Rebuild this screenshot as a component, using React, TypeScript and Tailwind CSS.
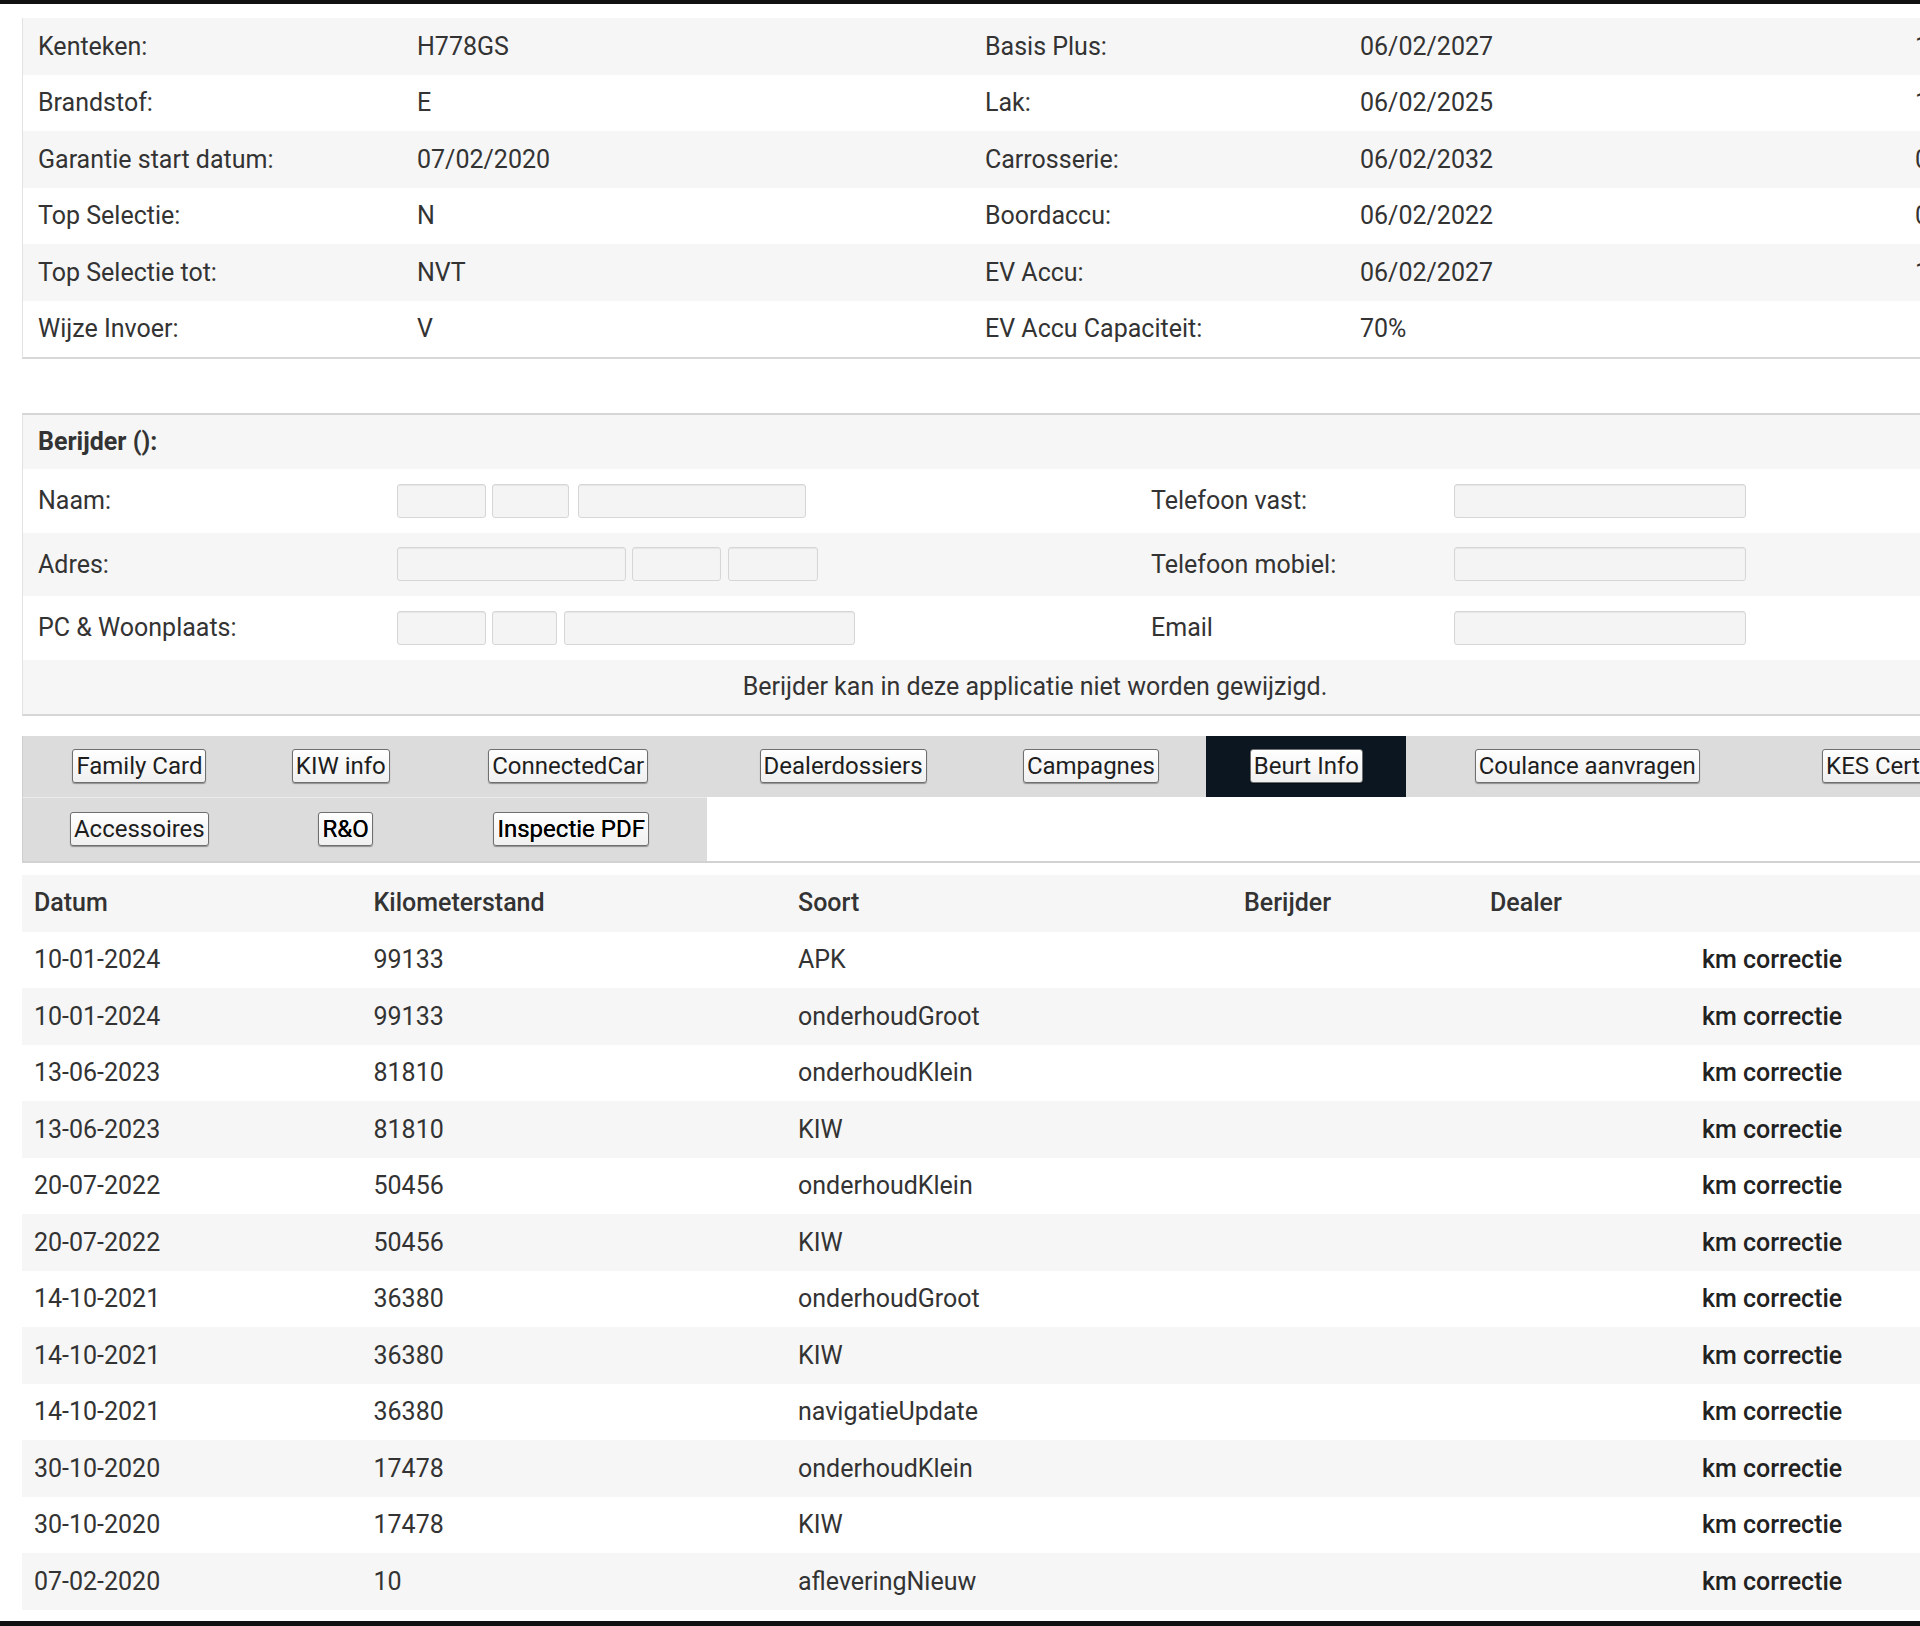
import React from "react";

const vehicleRows: [string, string, string, string, string][] = [
  ["Kenteken:", "H778GS", "Basis Plus:", "06/02/2027", "1"],
  ["Brandstof:", "E", "Lak:", "06/02/2025", "1"],
  ["Garantie start datum:", "07/02/2020", "Carrosserie:", "06/02/2032", "0"],
  ["Top Selectie:", "N", "Boordaccu:", "06/02/2022", "0"],
  ["Top Selectie tot:", "NVT", "EV Accu:", "06/02/2027", "1"],
  ["Wijze Invoer:", "V", "EV Accu Capaciteit:", "70%", ""],
];

const beurten: [string, string, string][] = [
  ["10-01-2024", "99133", "APK"],
  ["10-01-2024", "99133", "onderhoudGroot"],
  ["13-06-2023", "81810", "onderhoudKlein"],
  ["13-06-2023", "81810", "KIW"],
  ["20-07-2022", "50456", "onderhoudKlein"],
  ["20-07-2022", "50456", "KIW"],
  ["14-10-2021", "36380", "onderhoudGroot"],
  ["14-10-2021", "36380", "KIW"],
  ["14-10-2021", "36380", "navigatieUpdate"],
  ["30-10-2020", "17478", "onderhoudKlein"],
  ["30-10-2020", "17478", "KIW"],
  ["07-02-2020", "10", "afleveringNieuw"],
];

function Input({ w }: { w: string }) {
  return (
    <div
      className={`${w} h-[34px] rounded-[3px] border border-[#d6d6d6] bg-[#f4f4f4] shadow-[inset_0_1px_1px_rgba(0,0,0,0.06)]`}
    />
  );
}

function TabButton({ label, dark }: { label: string; dark?: boolean }) {
  return (
    <button
      className={`h-[34px] px-[3px] rounded-[3px] border border-[#6f6f6f] bg-gradient-to-b from-white to-[#f0f0f0] text-[24px] leading-none shadow-[0_1px_1px_rgba(0,0,0,0.35)] whitespace-nowrap ${
        dark ? "text-black [text-shadow:0_0_0.4px_#000]" : "text-[#1e1e1e]"
      }`}
    >
      {label}
    </button>
  );
}

export default function App() {
  return (
    <div className="w-[1920px] h-[1626px] overflow-hidden bg-white flex flex-col font-['Roboto',sans-serif] text-[25px] text-[#333]">
      <div className="h-[4px] bg-[#111] shrink-0" />
      <div className="flex-1 pl-[22px] pt-[14px] overflow-hidden">
        <div className="w-[2025px]">
          {/* Vehicle info table */}
          <div className="border-l border-[#e2e2e2] border-b-2 border-b-[#d8d8d8]">
            {vehicleRows.map((r, i) => (
              <div
                key={i}
                className={`h-[56.5px] grid grid-cols-[379px_568px_375px_555px_1fr] items-center ${
                  i % 2 === 0 ? "bg-[#f6f6f6]" : "bg-white"
                }`}
              >
                <div className="pl-[15px] whitespace-nowrap">{r[0]}</div>
                <div className="pl-[15px] whitespace-nowrap">{r[1]}</div>
                <div className="pl-[15px] whitespace-nowrap">{r[2]}</div>
                <div className="pl-[15px] whitespace-nowrap">{r[3]}</div>
                <div className="pl-[15px] whitespace-nowrap">{r[4]}</div>
              </div>
            ))}
          </div>

          {/* Berijder */}
          <div className="mt-[54px] border-t-2 border-[#d6d6d6] border-l border-l-[#e2e2e2] border-b-2 border-b-[#d6d6d6]">
            <div className="h-[54px] flex items-center bg-[#f6f6f6] pl-[15px] font-bold">Berijder ():</div>
            <div className="h-[63.5px] flex items-center bg-white">
              <div className="w-[373.5px] pl-[15px] shrink-0">Naam:</div>
              <div className="w-[754.5px] shrink-0 flex">
                <Input w="w-[89.5px]" />
                <div className="w-[6px]" />
                <Input w="w-[77px]" />
                <div className="w-[9px]" />
                <Input w="w-[227.5px]" />
              </div>
              <div className="w-[303px] shrink-0">Telefoon vast:</div>
              <Input w="w-[292px]" />
            </div>
            <div className="h-[63.5px] flex items-center bg-[#f6f6f6]">
              <div className="w-[373.5px] pl-[15px] shrink-0">Adres:</div>
              <div className="w-[754.5px] shrink-0 flex">
                <Input w="w-[229px]" />
                <div className="w-[6px]" />
                <Input w="w-[89.5px]" />
                <div className="w-[7px]" />
                <Input w="w-[90px]" />
              </div>
              <div className="w-[303px] shrink-0">Telefoon mobiel:</div>
              <Input w="w-[292px]" />
            </div>
            <div className="h-[63.5px] flex items-center bg-white">
              <div className="w-[373.5px] pl-[15px] shrink-0">PC &amp; Woonplaats:</div>
              <div className="w-[754.5px] shrink-0 flex">
                <Input w="w-[89.5px]" />
                <div className="w-[6px]" />
                <Input w="w-[65px]" />
                <div className="w-[7px]" />
                <Input w="w-[290.5px]" />
              </div>
              <div className="w-[303px] shrink-0">Email</div>
              <Input w="w-[292px]" />
            </div>
            <div className="h-[54px] flex items-center justify-center bg-[#f6f6f6]">
              Berijder kan in deze applicatie niet worden gewijzigd.
            </div>
          </div>

          {/* Tabs */}
          <div className="mt-[20px] border-b-2 border-[#d2d2d2]">
            <div className="h-[61px] flex bg-[#dcdcdc] border-l border-[#cfcfcf]">
              <div className="w-[233px] flex items-center justify-center"><TabButton label="Family Card" /></div>
              <div className="w-[170px] flex items-center justify-center"><TabButton label="KIW info" /></div>
              <div className="w-[285px] flex items-center justify-center"><TabButton label="ConnectedCar" /></div>
              <div className="w-[265px] flex items-center justify-center"><TabButton label="Dealerdossiers" /></div>
              <div className="w-[231px] flex items-center justify-center"><TabButton label="Campagnes" /></div>
              <div className="w-[200px] flex items-center justify-center bg-[#0b1620]"><TabButton label="Beurt Info" /></div>
              <div className="w-[362px] flex items-center justify-center"><TabButton label="Coulance aanvragen" /></div>
              <div className="w-[279px] flex items-center justify-start pl-[54px]"><TabButton label="KES Certificaat" /></div>
            </div>
            <div className="h-[64px] flex">
              <div className="w-[685px] flex bg-[#dcdcdc] border-l border-[#cfcfcf] border-t border-t-[#eaeaea]">
                <div className="w-[233px] flex items-center justify-center"><TabButton label="Accessoires" /></div>
                <div className="w-[180px] flex items-center justify-center"><TabButton label="R&O" dark /></div>
                <div className="w-[272px] flex items-center justify-center"><TabButton label="Inspectie PDF" dark /></div>
              </div>
              <div className="flex-1 bg-white" />
            </div>
          </div>

          {/* Beurt info table */}
          <div className="mt-[12px]">
            <div className="h-[57px] grid grid-cols-[339.5px_424.5px_446px_246px_212px_1fr] items-center bg-[#f6f6f6] font-medium">
              <div className="pl-[12px]">Datum</div>
              <div className="pl-[12px]">Kilometerstand</div>
              <div className="pl-[12px]">Soort</div>
              <div className="pl-[12px]">Berijder</div>
              <div className="pl-[12px]">Dealer</div>
              <div />
            </div>
            {beurten.map((b, i) => (
              <div
                key={i}
                className={`h-[56.5px] grid grid-cols-[339.5px_424.5px_446px_246px_212px_1fr] items-center ${
                  i % 2 === 0 ? "bg-white" : "bg-[#f6f6f6]"
                }`}
              >
                <div className="pl-[12px]">{b[0]}</div>
                <div className="pl-[12px]">{b[1]}</div>
                <div className="pl-[12px]">{b[2]}</div>
                <div />
                <div />
                <div className="pl-[12px] font-medium text-[#222]">km correctie</div>
              </div>
            ))}
          </div>
        </div>
      </div>
      <div className="h-[5px] bg-[#111] shrink-0" />
    </div>
  );
}
